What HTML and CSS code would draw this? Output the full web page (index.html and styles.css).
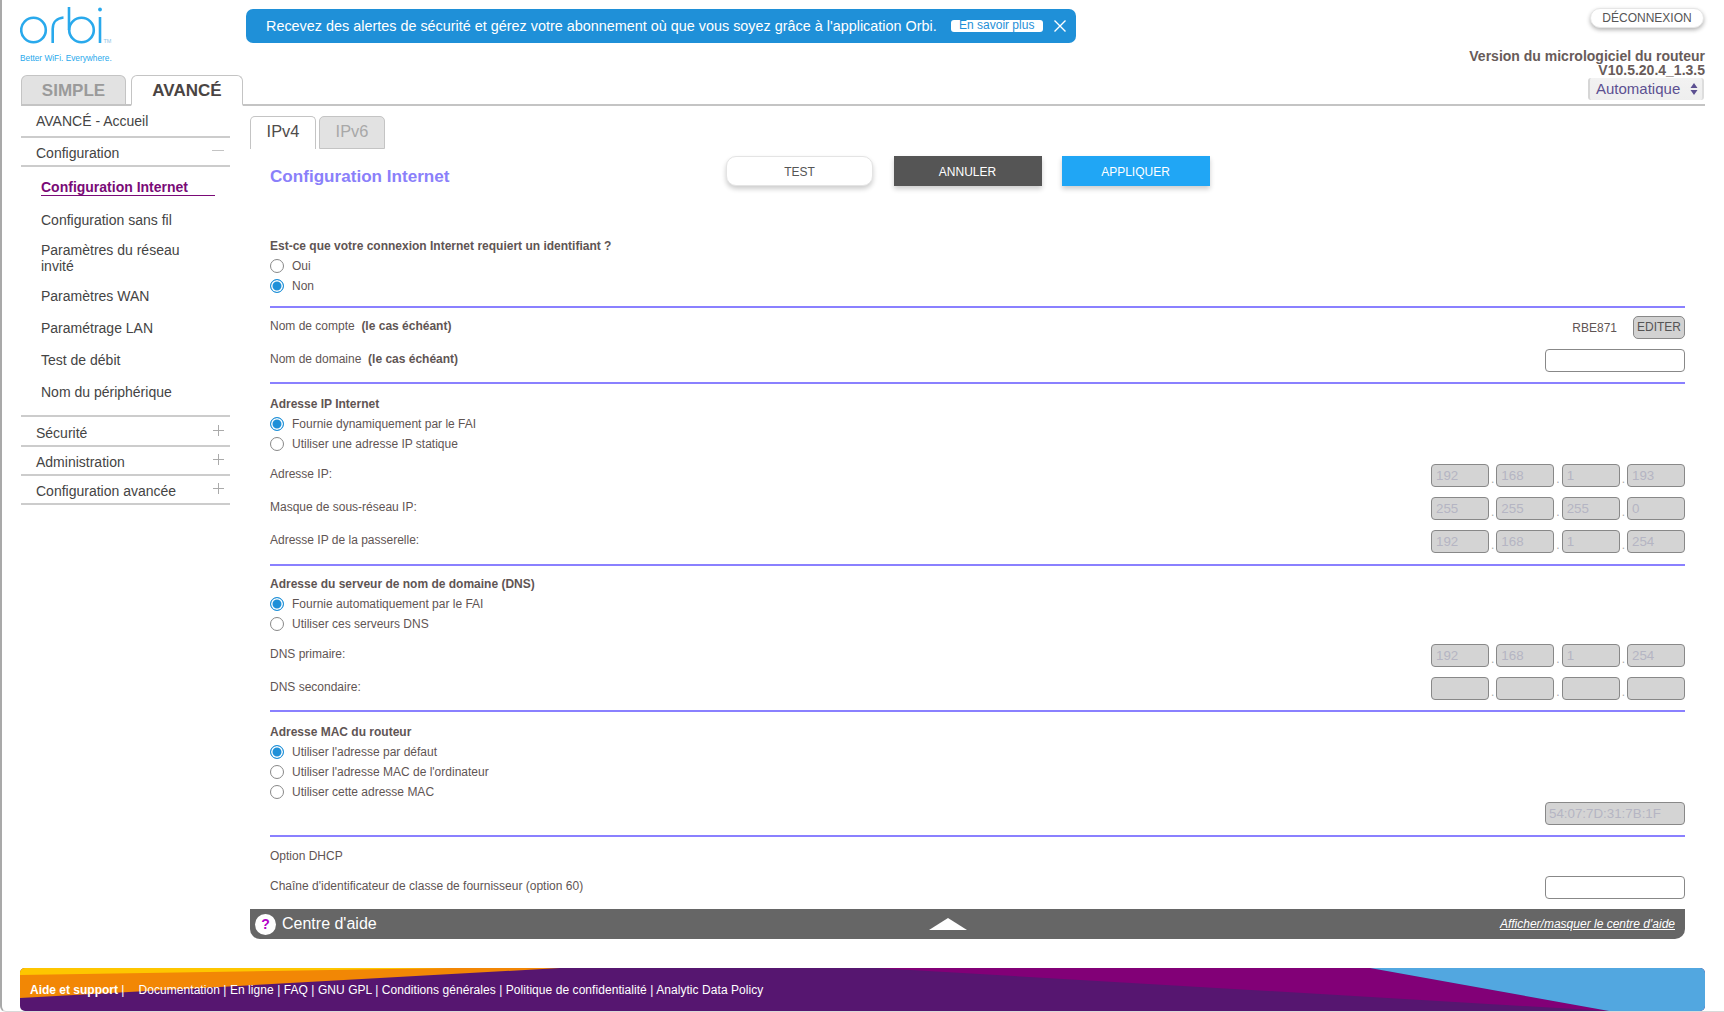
FILE: index.html
```html
<!DOCTYPE html>
<html lang="fr">
<head>
<meta charset="utf-8">
<title>Orbi - Configuration Internet</title>
<link rel="stylesheet" href="styles.css">
</head>
<body>
<div class="page">
  <header class="head">
    <div class="brand">
      <svg class="logo" viewBox="0 0 94 38" width="94" height="38" aria-label="orbi">
        <g fill="none" stroke="#29a9ec" stroke-width="2.600">
          <circle cx="13.500" cy="23" r="12.300"/>
          <path d="M32.700 36V22c0-7 4.500-11 10.800-11.500"/>
          <path d="M49 0v23"/>
          <circle cx="61.500" cy="23" r="12.300"/>
          <path d="M80 10v26"/>
        </g>
        <circle cx="80" cy="2.500" r="1.900" fill="#29a9ec"/>
        <text x="83.500" y="36" class="tm">TM</text>
      </svg>
      <div class="tagline">Better WiFi. Everywhere.</div>
    </div>
    <div class="banner">
      <span class="banner-text">Recevez des alertes de sécurité et gérez votre abonnement où que vous soyez grâce à l'application Orbi.</span>
      <a class="more">En savoir plus</a>
      <svg class="close" viewBox="0 0 12 12" width="12" height="12"><path d="M.5.5l11 11M11.500.5l-11 11" stroke="#fff" stroke-width="1.400"/></svg>
    </div>
    <div class="head-right">
      <a class="logout">DÉCONNEXION</a>
      <div class="version">Version du micrologiciel du routeur<br>V10.5.20.4_1.3.5</div>
      <div class="lang">Automatique
        <svg class="updown" viewBox="0 0 8 14" width="8" height="14"><path d="M4 1l3.500 5h-7zM4 13l3.500-5h-7z" fill="#5c5091"/></svg>
      </div>
    </div>
    <nav class="mode-tabs">
      <a class="mode-tab off">SIMPLE</a>
      <a class="mode-tab on">AVANCÉ</a>
    </nav>
  </header>

  <div class="body-row">
    <aside class="side">
      <a class="side-home">AVANCÉ - Accueil</a>
      <div class="side-head"><span>Configuration</span><i class="minus"></i></div>
      <ul class="side-list">
        <li class="current"><span>Configuration Internet</span></li>
        <li class="l2">Configuration sans fil</li>
        <li class="l3">Paramètres du réseau invité</li>
        <li class="l4">Paramètres WAN</li>
        <li class="l5">Paramétrage LAN</li>
        <li class="l5">Test de débit</li>
        <li class="l5">Nom du périphérique</li>
      </ul>
      <div class="side-head sec"><span>Sécurité</span><i class="plus"></i></div>
      <div class="side-head"><span>Administration</span><i class="plus"></i></div>
      <div class="side-head"><span>Configuration avancée</span><i class="plus"></i></div>
    </aside>

    <main class="main">
      <div class="ip-tabs">
        <a class="ip-tab on">IPv4</a>
        <a class="ip-tab off">IPv6</a>
      </div>
      <div class="title-row">
        <h1>Configuration Internet</h1>
        <div class="actions">
          <a class="btn test">TEST</a>
          <a class="btn cancel">ANNULER</a>
          <a class="btn apply">APPLIQUER</a>
        </div>
      </div>

      <section class="sect s-login">
        <h2>Est-ce que votre connexion Internet requiert un identifiant ?</h2>
        <label class="radio"><i class="dot"></i>Oui</label>
        <label class="radio"><i class="dot sel"></i>Non</label>
      </section>

      <section class="sect s-account">
        <div class="row r-account"><span>Nom de compte&nbsp; <b>(le cas échéant)</b></span>
          <span class="acct">RBE871<a class="edit">EDITER</a></span></div>
        <div class="row r-domain"><span>Nom de domaine&nbsp; <b>(le cas échéant)</b></span><span class="field"></span></div>
      </section>

      <section class="sect s-ip">
        <h2>Adresse IP Internet</h2>
        <label class="radio"><i class="dot sel"></i>Fournie dynamiquement par le FAI</label>
        <label class="radio"><i class="dot"></i>Utiliser une adresse IP statique</label>
        <div class="ips">
          <div class="row"><span>Adresse IP:</span><span class="ip"><i>192</i><u>.</u><i>168</i><u>.</u><i>1</i><u>.</u><i>193</i></span></div>
          <div class="row"><span>Masque de sous-réseau IP:</span><span class="ip"><i>255</i><u>.</u><i>255</i><u>.</u><i>255</i><u>.</u><i>0</i></span></div>
          <div class="row"><span>Adresse IP de la passerelle:</span><span class="ip"><i>192</i><u>.</u><i>168</i><u>.</u><i>1</i><u>.</u><i>254</i></span></div>
        </div>
      </section>

      <section class="sect s-dns">
        <h2>Adresse du serveur de nom de domaine (DNS)</h2>
        <label class="radio"><i class="dot sel"></i>Fournie automatiquement par le FAI</label>
        <label class="radio"><i class="dot"></i>Utiliser ces serveurs DNS</label>
        <div class="ips">
          <div class="row"><span>DNS primaire:</span><span class="ip"><i>192</i><u>.</u><i>168</i><u>.</u><i>1</i><u>.</u><i>254</i></span></div>
          <div class="row"><span>DNS secondaire:</span><span class="ip"><i></i><u>.</u><i></i><u>.</u><i></i><u>.</u><i></i></span></div>
        </div>
      </section>

      <section class="sect s-mac">
        <h2>Adresse MAC du routeur</h2>
        <label class="radio"><i class="dot sel"></i>Utiliser l'adresse par défaut</label>
        <label class="radio"><i class="dot"></i>Utiliser l'adresse MAC de l'ordinateur</label>
        <label class="radio"><i class="dot"></i>Utiliser cette adresse MAC</label>
        <div class="mac-row"><span class="field off">54:07:7D:31:7B:1F</span></div>
      </section>

      <section class="s-dhcp">
        <div class="dhcp-title">Option DHCP</div>
        <div class="row r-vendor"><span>Chaîne d'identificateur de classe de fournisseur (option 60)</span><span class="field"></span></div>
      </section>

      <div class="help">
        <span class="help-l"><i class="q">?</i>Centre d'aide</span>
        <svg class="up" viewBox="0 0 40 12" width="40" height="12"><path d="M20 0l19 12H1z" fill="#fff"/></svg>
        <a class="help-r">Afficher/masquer le centre d'aide</a>
      </div>
    </main>
  </div>

  <footer class="foot">
    <svg class="foot-bg" viewBox="0 0 1685 43" preserveAspectRatio="none" aria-hidden="true">
      <rect width="1685" height="43" fill="#561670"/>
      <path d="M0 0H540L0 30z" fill="#f28705"/>
      <path d="M0 0H432L0 7z" fill="#fec600"/>
      <path d="M856 0H1350L1589 43z" fill="#820077"/>
      <path d="M1350 0H1685V43H1589z" fill="#52a7e0"/>
    </svg>
    <div class="foot-links"><b>Aide et support</b> |<span class="gap"></span><span class="foot-list">Documentation | En ligne | FAQ | GNU GPL | Conditions générales | Politique de confidentialité | Analytic Data Policy</span></div>
  </footer>
</div>
</body>
</html>
```

FILE: styles.css
```css
* { box-sizing: border-box; }
html, body { margin: 0; padding: 0; background: #fff; }
body { font-family: "Liberation Sans", Arial, sans-serif; color: #5f5554; font-size: 12px; }
a { cursor: pointer; }

.page {
  width: 1724px;
  height: 1012px;
  padding-left: 19px;
  border-left: 2px solid #a9a9a9;
  border-bottom: 1px solid #d9d9d9;
  border-bottom-left-radius: 6px;
  overflow: hidden;
}

/* header */
.head {
  position: relative;
  width: 1684px;
  height: 106px;
  border-bottom: 2px solid #c4c4c4;
  display: grid;
  grid-template-columns: 225px 830px 1fr;
  align-items: start;
}
.brand { padding-top: 7px; margin-left: -1px; }
.logo { display: block; }
.tm { font-size: 5.500px; fill: #8fc4e6; }
.tagline { font-size: 8.300px; line-height: 10px; color: #29a9ec; margin-top: 8px; white-space: nowrap; }
.banner {
  margin-top: 9px;
  height: 34px;
  background: #1f90d8;
  border-radius: 7px;
  color: #fff;
  display: flex;
  align-items: center;
  padding-left: 20px;
  font-size: 14.400px;
}
.banner-text { white-space: nowrap; }
.more {
  flex: none;
  margin-left: 14px;
  width: 92px;
  height: 12px;
  line-height: 11px;
  background: #fff;
  color: #1f90d8;
  border-radius: 3px;
  font-size: 12px;
  text-align: center;
  white-space: nowrap;
}
.close { flex: none; margin-left: 11px; }
.head-right { display: flex; flex-direction: column; align-items: flex-end; }
.logout {
  margin-top: 8px;
  margin-right: 1px;
  width: 114px;
  height: 20px;
  line-height: 19px;
  border: 1px solid #e6e6e6;
  border-radius: 10px;
  background: #fff;
  box-shadow: 0 2px 4px rgba(0,0,0,.3);
  font-size: 12px;
  color: #555;
  text-align: center;
}
.version {
  margin-top: 21px;
  font-size: 14px;
  line-height: 14px;
  font-weight: bold;
  color: #685b59;
  text-align: right;
}
.lang {
  margin-top: 1px;
  margin-right: 1px;
  width: 116px;
  height: 22px;
  line-height: 21px;
  padding-left: 6px;
  position: relative;
  font-size: 15px;
  color: #5c5091;
  background: linear-gradient(#f2f2f2, #eee);
  border-left: 2px solid #d6d6d6;
  border-right: 2px solid #ddd;
  border-radius: 3px;
}
.updown { position: absolute; right: 4px; top: 4px; }
.mode-tabs { position: absolute; left: 0; top: 75px; display: flex; gap: 5px; }
.mode-tab {
  height: 31px;
  border: 1px solid #c4c4c4;
  border-radius: 6px 6px 0 0;
  font-size: 17px;
  font-weight: bold;
  line-height: 29px;
  text-align: center;
}
.mode-tab.off { width: 105px; background: #e2e2e2; color: #9a9a9a; border-bottom: 2px solid #c4c4c4; }
.mode-tab.on { width: 112px; background: #fff; color: #4a4443; border-bottom: 2px solid #fff; }

/* layout */
.body-row { display: flex; height: 862px; }

/* sidebar */
.side { width: 209px; flex: none; font-size: 14px; color: #444; }
.side-home { display: block; height: 32px; padding: 7px 0 0 15px; border-bottom: 2px solid #ccc; }
.side-head {
  display: flex;
  justify-content: space-between;
  height: 29px;
  padding: 7px 6px 0 15px;
  border-bottom: 2px solid #ccc;
}
.side-head.sec { height: 30px; padding-top: 8px; }
.minus { width: 12px; height: 1px; background: #c4c4c4; margin-top: 5px; }
.plus { width: 11px; height: 11px; margin-top: 0; position: relative; }
.plus::before { content: ""; position: absolute; left: 0; right: 0; top: 5px; height: 1px; background: #aaa; }
.plus::after { content: ""; position: absolute; top: 0; bottom: 0; left: 5px; width: 1px; background: #aaa; }
.side-list { list-style: none; margin: 0; padding: 11px 0 0 20px; border-bottom: 2px solid #ccc; height: 250px; }
.side-list li { width: 170px; line-height: 18px; }
.side-list li.current { width: 174px; height: 18px; border-bottom: 1px solid #7a0a77; color: #7a0a77; font-weight: bold; }
.side-list .l2 { margin-top: 15px; }
.side-list .l3 { margin-top: 13px; line-height: 16px; }
.side-list .l4 { margin-top: 13px; }
.side-list .l5 { margin-top: 14px; }

/* main */
.main { margin-left: 20px; width: 1435px; font-size: 12px; }
.ip-tabs { display: flex; gap: 3px; height: 33px; margin-top: 10px; }
.ip-tab {
  width: 66px;
  height: 33px;
  border: 1px solid #c4c4c4;
  border-radius: 5px 5px 0 0;
  font-size: 16.400px;
  line-height: 29px;
  text-align: center;
}
.ip-tab.on { border-bottom: 0; color: #4f4b4a; background: #fff; }
.ip-tab.off { color: #a8a8a8; background: #e2e2e2; }

.title-row { display: flex; margin: 7px 0 0 20px; height: 30px; }
h1 { margin: 0; font-size: 17.100px; line-height: 42px; width: 456px; color: #8a80fa; font-weight: bold; }
.actions { display: flex; }
.btn { width: 148px; height: 30px; line-height: 32px; text-align: center; font-size: 12px; box-shadow: 0 3px 5px rgba(0,0,0,.2); }
.btn.test { width: 147px; margin-right: 21px; border: 1px solid #e4e4e4; border-radius: 10px; background: #fff; color: #555; line-height: 30px; }
.btn.cancel { margin-right: 20px; padding-right: 1px; background: #555; color: #fff; }
.btn.apply { padding-right: 1px; background: #20a6f5; color: #fff; }

.sect { margin-left: 20px; width: 1415px; border-bottom: 2px solid #8a80ff; }
.s-login { margin-top: 50px; height: 72px; }
.s-login h2 { height: 19.500px; }
.s-account { height: 76px; padding-top: 3px; }
.s-ip { height: 182px; padding-top: 10px; }
.s-dns { height: 146px; padding-top: 8px; }
.s-mac { height: 125px; padding-top: 10px; }
h2 { margin: 0; height: 20px; font-size: 12px; line-height: 20px; font-weight: bold; color: #5f5554; }

.radio { display: flex; align-items: center; height: 20px; gap: 8px; }
.dot { width: 14px; height: 14px; border-radius: 50%; border: 1px solid #888; background: #fff; flex: none; }
.dot.sel { border: 1.500px solid #1f90d8; box-shadow: inset 0 0 0 1.500px #fff; background: #1f90d8; }

.row { display: flex; justify-content: space-between; align-items: center; }
.row > span:first-child { margin-bottom: 3px; }
.r-account { height: 33px; }
.r-domain { height: 33px; }
.acct { display: flex; align-items: center; gap: 16px; }
.edit {
  width: 52px;
  height: 23px;
  line-height: 21px;
  text-align: center;
  background: #d2d2d2;
  border: 1px solid #888;
  border-radius: 5px;
  color: #555;
}
.field { width: 140px; height: 23px; border: 1px solid #888; border-radius: 4px; background: #fff; display: block; }
.field.off { background: #d4d4d4; color: #b5b5c3; padding-left: 3px; line-height: 22px; font-size: 13.330px; }

.ips { margin-top: 5px; }
.ips .row { height: 33px; }
.ip { display: flex; align-items: flex-end; }
.ip i {
  width: 58px;
  height: 23px;
  border: 1px solid #888;
  border-radius: 4px;
  background: #d4d4d4;
  color: #b5b5c3;
  font-style: normal;
  font-size: 13.330px;
  line-height: 22px;
  padding-left: 4px;
}
.ip u { width: 7.330px; text-decoration: none; color: #aaa; line-height: 16px; text-align: center; }
.mac-row { display: flex; justify-content: flex-end; }

.s-dhcp { margin-left: 20px; width: 1415px; height: 72px; }
.dhcp-title { padding-top: 11px; height: 34px; line-height: 16px; }
.r-vendor { height: 33px; }

.help {
  height: 30px;
  background: #666;
  border-radius: 0 0 10px 10px;
  color: #fff;
  display: grid;
  grid-template-columns: 673px 40px 1fr;
  align-items: center;
  padding: 0 10px 0 5px;
}
.help-l { display: flex; align-items: center; font-size: 16px; gap: 6px; }
.q { width: 21px; height: 21px; border-radius: 50%; background: #fff; color: #b400c8; font-style: normal; font-weight: bold; font-size: 14px; line-height: 21px; text-align: center; }
.up { display: block; }
.help-r { justify-self: end; text-decoration: underline; font-style: italic; font-size: 12px; }

/* footer */
.foot { position: relative; margin-left: -1px; width: 1685px; height: 43px; border-radius: 5px; overflow: hidden; }
.foot-bg { position: absolute; inset: 0; width: 100%; height: 100%; display: block; }
.foot-links { position: relative; padding: 14px 0 0 10px; font-size: 12px; color: #fff; line-height: 16px; white-space: nowrap; }
.gap { display: inline-block; width: 14px; }
.foot-list { letter-spacing: .06px; }
```
